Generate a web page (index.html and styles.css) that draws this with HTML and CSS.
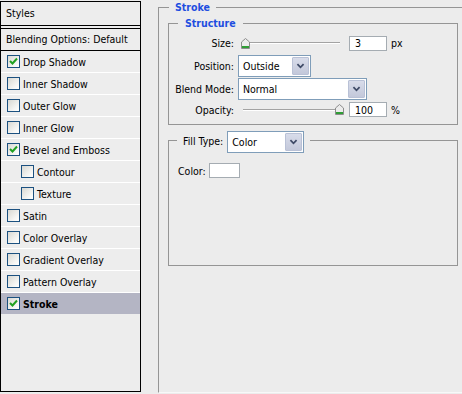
FILE: index.html
```html
<!DOCTYPE html>
<html lang="en">
<head>
  <meta charset="UTF-8" />
  <title>Layer Style - Stroke</title>
  <link rel="stylesheet" href="styles.css">
</head>
<body>
  <div class="dialog">
    <aside class="styles-panel">
      <div class="panel-title">Styles</div>
      <ul class="style-list">
        <li class="blend-row">Blending Options: Default</li>
        <li class="style-row"><span class="check"><svg viewBox="0 0 11 11"><polyline points="2,5 4.5,7.5 9,2.5"/></svg></span>Drop Shadow</li>
        <li class="style-row"><span class="check"></span>Inner Shadow</li>
        <li class="style-row"><span class="check"></span>Outer Glow</li>
        <li class="style-row"><span class="check"></span>Inner Glow</li>
        <li class="style-row"><span class="check"><svg viewBox="0 0 11 11"><polyline points="2,5 4.5,7.5 9,2.5"/></svg></span>Bevel and Emboss</li>
        <li class="style-row sub"><span class="check"></span>Contour</li>
        <li class="style-row sub"><span class="check"></span>Texture</li>
        <li class="style-row"><span class="check"></span>Satin</li>
        <li class="style-row"><span class="check"></span>Color Overlay</li>
        <li class="style-row"><span class="check"></span>Gradient Overlay</li>
        <li class="style-row"><span class="check"></span>Pattern Overlay</li>
        <li class="style-row selected"><span class="check"><svg viewBox="0 0 11 11"><polyline points="2,5 4.5,7.5 9,2.5"/></svg></span>Stroke</li>
      </ul>
    </aside>

    <main class="settings">
      <fieldset class="group outer">
        <legend class="legend-blue legend-stroke">Stroke</legend>

        <fieldset class="group structure">
          <legend class="legend-blue legend-structure">Structure</legend>

          <div class="row row-size">
            <label class="lbl">Size:</label>
            <div class="slider">
              <span class="thumb"><svg viewBox="0 0 9 11"><path d="M0.5 4 L4.5 0.5 L8.5 4 V10.5 H0.5 Z" fill="#ececec" stroke="#8c8c8c"/><rect x="1" y="8" width="7" height="2" fill="#2f9e35"/></svg></span>
            </div>
            <input class="num" type="text" value="3">
            <span class="unit">px</span>
          </div>

          <div class="row row-position">
            <label class="lbl">Position:</label>
            <div class="select select-position">
              <span class="select-text">Outside</span>
              <span class="drop"><svg viewBox="0 0 17 18"><polyline points="5,7 8.5,10.5 12,7"/></svg></span>
            </div>
          </div>

          <div class="row row-blend">
            <label class="lbl">Blend Mode:</label>
            <div class="select select-blend">
              <span class="select-text">Normal</span>
              <span class="drop"><svg viewBox="0 0 17 18"><polyline points="5,7 8.5,10.5 12,7"/></svg></span>
            </div>
          </div>

          <div class="row row-opacity">
            <label class="lbl">Opacity:</label>
            <div class="slider slider-max">
              <span class="thumb"><svg viewBox="0 0 9 11"><path d="M0.5 4 L4.5 0.5 L8.5 4 V10.5 H0.5 Z" fill="#ececec" stroke="#8c8c8c"/><rect x="1" y="8" width="7" height="2" fill="#2f9e35"/></svg></span>
            </div>
            <input class="num" type="text" value="100">
            <span class="unit">%</span>
          </div>
        </fieldset>

        <fieldset class="group fill">
          <legend class="legend-fill">
            <span class="fill-label">Fill Type:</span>
            <div class="select select-fill">
              <span class="select-text">Color</span>
              <span class="drop"><svg viewBox="0 0 17 18"><polyline points="5,7 8.5,10.5 12,7"/></svg></span>
            </div>
          </legend>
          <div class="color-row">
            <span>Color:</span>
            <span class="swatch"></span>
          </div>
        </fieldset>
      </fieldset>
    </main>
  </div>
</body>
</html>
```

FILE: styles.css
```css
body {
  margin: 0;
  width: 462px;
  height: 394px;
  overflow: hidden;
  background-color: #ececec;
  font-family: "DejaVu Sans Condensed", "Liberation Sans", sans-serif;
  font-size: 10.5px;
  color: #000;
}

.dialog {
  display: flex;
  height: 394px;
}

/* left list of effects */
.styles-panel {
  width: 141px;
  height: 391px;
  margin-top: 1px;
  box-sizing: border-box;
  border: 1px solid #000;
  background-color: #ededed;
  display: flex;
  flex-direction: column;
}

.panel-title {
  height: 23px;
  line-height: 23px;
  padding-left: 5px;
  border-bottom: 1px solid #000;
}

.style-list {
  list-style: none;
  margin: 2px 0 0 0;
  padding: 0;
  border-top: 1px solid #000;
  flex: 1;
}

.blend-row {
  height: 21px;
  line-height: 21px;
  padding-left: 5px;
  border-bottom: 1px solid #000;
}

.style-row {
  display: flex;
  align-items: center;
  height: 21px;
  padding-left: 6px;
  border-bottom: 1px solid #fff;
}

.style-row:last-child {
  border-bottom: none;
}

.style-row.sub {
  padding-left: 20px;
}

.style-row.selected {
  background-color: #b4b5c4;
  font-weight: bold;
}

.check {
  width: 13px;
  height: 13px;
  box-sizing: border-box;
  border: 1px solid #1c5180;
  background: linear-gradient(135deg, #d8d8d2, #f6f6f4 70%, #fff);
  margin-right: 3px;
  flex-shrink: 0;
}

.check svg {
  display: block;
  width: 11px;
  height: 11px;
}

.check polyline {
  fill: none;
  stroke: #21a121;
  stroke-width: 2;
}

/* right side settings */
.settings {
  flex: 1;
  margin-left: 17px;
}

.group {
  margin: 0;
  padding: 0;
  border: 1px solid #959595;
  min-inline-size: 0;
}

.outer {
  height: 393px;
  box-sizing: border-box;
  border-right: none;
  border-bottom: 1px solid #f8f8f8;
  padding: 2px 4px 0 9px;
}

.legend-blue {
  color: #1e4ee0;
  font-weight: bold;
  line-height: 14px;
}

.legend-stroke {
  margin-left: 1px;
  padding: 0 6px;
}

.structure {
  padding: 4px 0 6px 0;
}

.legend-structure {
  margin-left: 9px;
  padding: 0 7px;
}

.row {
  display: flex;
  align-items: center;
}

.row-size {
  height: 18px;
}

.row-position {
  height: 22px;
  margin-top: 3px;
}

.row-blend {
  height: 22px;
  margin-top: 1px;
}

.row-opacity {
  height: 17px;
  margin-top: 1px;
}

.lbl {
  width: 65px;
  margin-right: 4px;
  text-align: right;
}

.slider {
  width: 107px;
  height: 18px;
  display: flex;
  align-items: center;
  justify-content: flex-start;
  background:
    linear-gradient(#a3a3a3, #a3a3a3) 5px 8px / 97px 1px no-repeat,
    linear-gradient(#fff, #fff) 5px 9px / 97px 1px no-repeat;
}

.slider-max {
  justify-content: flex-end;
}

.thumb {
  width: 9px;
  height: 11px;
  margin: 0 2px 0 3px;
}

.slider-max .thumb {
  margin: 0 1px 0 0;
}

.thumb svg {
  display: block;
  width: 9px;
  height: 11px;
}

.num {
  width: 38px;
  height: 15px;
  box-sizing: border-box;
  margin: 0 0 0 4px;
  padding: 0 0 0 5px;
  border: 1px solid #a5acb2;
  background: #fff;
  font: inherit;
  color: #000;
}

.unit {
  margin-left: 4px;
}

.select {
  height: 22px;
  box-sizing: border-box;
  border: 1px solid #7f9db9;
  background: #fff;
  display: flex;
  align-items: center;
  padding: 1px;
}

.select-text {
  flex: 1;
  padding-left: 3px;
}

.select-position {
  width: 73px;
}

.select-blend {
  width: 129px;
}

.drop {
  width: 17px;
  height: 18px;
  box-sizing: border-box;
  border: 1px solid #b9c1d6;
  border-radius: 1px;
  background: linear-gradient(#d8dcea, #c3c8da);
}

.drop svg {
  display: block;
  width: 15px;
  height: 16px;
}

.drop polyline {
  fill: none;
  stroke: #3e4a66;
  stroke-width: 2;
}

/* fill type box */
.fill {
  margin-top: 6px;
  padding: 14px 0 87px 9px;
}

.legend-fill {
  display: flex;
  align-items: flex-start;
  height: 18px;
  margin-left: -1px;
  padding: 0 6px;
}

.fill-label {
  line-height: 20px;
  margin-right: 4px;
}

.select-fill {
  width: 77px;
  flex-shrink: 0;
}

.color-row {
  display: flex;
  align-items: center;
  height: 15px;
}

.swatch {
  width: 31px;
  height: 15px;
  box-sizing: border-box;
  margin-left: 3px;
  border: 1px solid #a5acb2;
  background: #fff;
}
```
